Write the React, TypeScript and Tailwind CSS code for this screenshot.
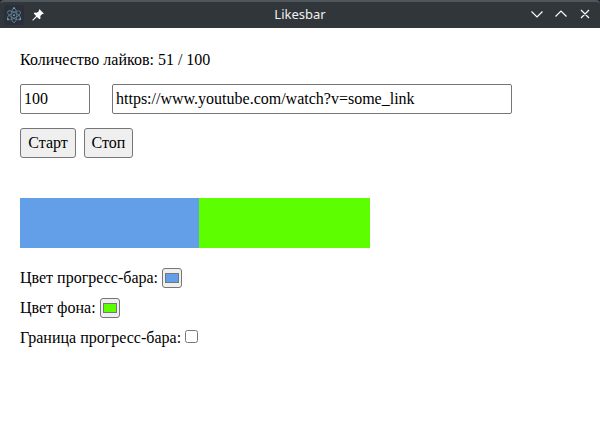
import { useState } from "react";

function ElectronLogo() {
  return (
    <svg width="22" height="22" viewBox="0 0 22 22" fill="none">
      <rect x="1" y="1" width="20" height="20" rx="4" fill="#2b2e3b" />
      <g stroke="#5c7f8c" strokeWidth="0.9">
        <ellipse cx="11" cy="11.3" rx="7.2" ry="2.8" transform="rotate(30 11 11.3)" />
        <ellipse cx="11" cy="11.3" rx="7.2" ry="2.8" transform="rotate(90 11 11.3)" />
        <ellipse cx="11" cy="11.3" rx="7.2" ry="2.8" transform="rotate(150 11 11.3)" />
      </g>
      <g fill="#7da0ac">
        <circle cx="11" cy="11.3" r="1" />
        <circle cx="11" cy="4.2" r="1" />
        <circle cx="4.9" cy="15.2" r="1" />
        <circle cx="17.2" cy="15" r="1" />
      </g>
    </svg>
  );
}

function PinIcon() {
  return (
    <svg width="12" height="12" viewBox="0 0 12 12" fill="#fcfcfc">
      <path d="M7.5 0.2 11.8 4.5 10.9 5.2 10.2 5 8.3 7.1 8.5 9.4 7.5 10.3 4.9 7.9 0.9 11.7 0.3 11.1 4.1 7.1 1.7 4.6 2.6 3.6 4.9 3.8 7 1.9 6.8 1.1Z" />
    </svg>
  );
}

function TitleBar() {
  return (
    <header className="grid h-7 grid-cols-[1fr_auto_1fr] items-center rounded-t-[4px] border-t-2 border-[#50575c] bg-[#31363b] font-['Noto_Sans',sans-serif] text-[13px] text-[#eff0f1]">
      <div className="flex items-center gap-[7px] pb-px pl-[3px]">
        <ElectronLogo />
        <PinIcon />
      </div>
      <h1 className="pb-0.5 leading-6">Likesbar</h1>
      <svg
        className="mb-[2px] mr-[9px] justify-self-end"
        width="60"
        height="12"
        viewBox="0 0 60 12"
        fill="none"
        stroke="#fcfcfc"
        strokeWidth="1.2"
      >
        <path d="M.5 3.5 6 9 11.5 3.5M24.5 8.5 30 3 35.5 8.5M50 2l8 8M58 2l-8 8" />
      </svg>
    </header>
  );
}

const field =
  "h-[30px] rounded-[2px] border border-[#767676] bg-white px-[3px] outline-none";
const button =
  "h-[30px] rounded-[3px] border border-[#767676] bg-[#efefef] text-center";
const swatch =
  "flex h-5 w-5 items-center justify-center rounded-[3px] border border-[#767676] bg-[#efefef]";

export default function App() {
  const [likes, setLikes] = useState("100");
  const [link, setLink] = useState("https://www.youtube.com/watch?v=some_link");
  const [bordered, setBordered] = useState(false);

  return (
    <div className="h-[428px] w-[600px] overflow-hidden bg-white font-['Liberation_Serif','Times_New_Roman',serif] text-base text-black">
      <div className="bg-[#17202a]">
        <TitleBar />
      </div>
      <main className="flex flex-col px-5 pt-5">
        <p className="h-6 leading-6">Количество лайков: 51 / 100</p>
        <div className="mt-3 flex gap-[22px]">
          <input
            className={`${field} w-[70px]`}
            value={likes}
            onChange={(e) => setLikes(e.target.value)}
          />
          <input
            className={`${field} w-[400px]`}
            value={link}
            onChange={(e) => setLink(e.target.value)}
          />
        </div>
        <div className="mt-3.5 flex gap-2">
          <button className={`${button} w-14`}>Старт</button>
          <button className={`${button} w-[49px]`}>Стоп</button>
        </div>
        <div className="mt-10 h-[50px] w-[350px] bg-[#5dff00]">
          <div className="h-full w-[51%] bg-[#629fe8]" />
        </div>
        <div className="mt-[15px] flex flex-col">
          <div className="flex h-[30px] items-center gap-1">
            <span>Цвет прогресс-бара:</span>
            <button className={swatch} aria-label="Цвет прогресс-бара">
              <span className="h-[10px] w-[14px] border border-[#777777] bg-[#629fe8]" />
            </button>
          </div>
          <div className="flex h-[30px] items-center gap-1">
            <span>Цвет фона:</span>
            <button className={swatch} aria-label="Цвет фона">
              <span className="h-[10px] w-[14px] border border-[#777777] bg-[#5dff00]" />
            </button>
          </div>
          <label className="flex h-[30px] items-center gap-1">
            <span>Граница прогресс-бара:</span>
            <input
              type="checkbox"
              className="mb-[3px] h-[13px] w-[13px]"
              checked={bordered}
              onChange={(e) => setBordered(e.target.checked)}
            />
          </label>
        </div>
      </main>
    </div>
  );
}
